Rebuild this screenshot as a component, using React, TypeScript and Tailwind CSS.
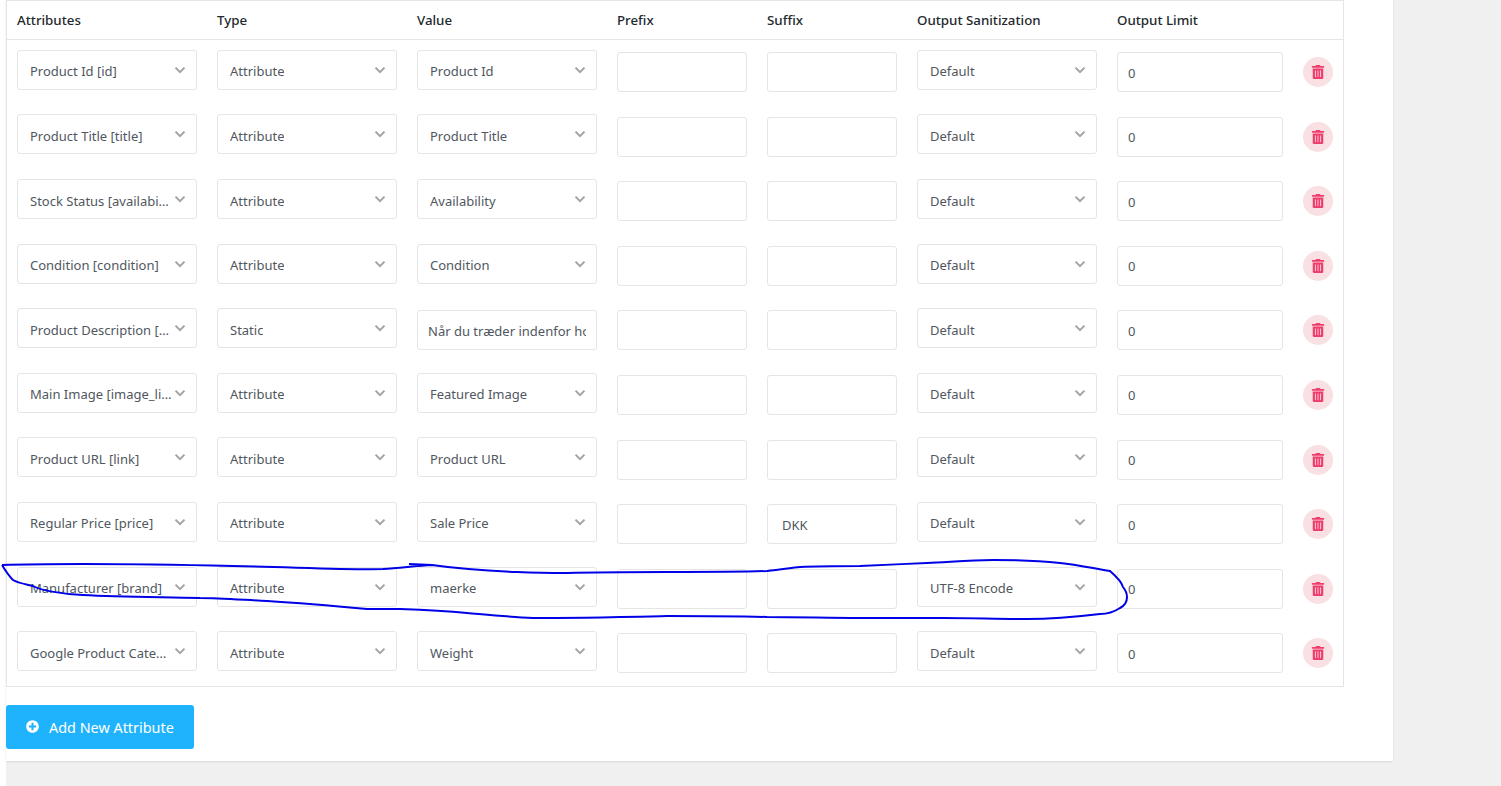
import React from "react";
import {FaPlusCircle, FaTrashAlt} from "react-icons/fa";

type Row = {
    attr: string
    type: string
    value: string
    valueInput?: boolean
    suffix?: string
    sanitize?: string
}

const rows: Row[] = [
    {attr: "Product Id [id]", type: "Attribute", value: "Product Id"},
    {attr: "Product Title [title]", type: "Attribute", value: "Product Title"},
    {attr: "Stock Status [availability]", type: "Attribute", value: "Availability"},
    {attr: "Condition [condition]", type: "Attribute", value: "Condition"},
    {attr: "Product Description [description]", type: "Static", value: "Når du træder indenfor hos os", valueInput: true},
    {attr: "Main Image [image_link]", type: "Attribute", value: "Featured Image"},
    {attr: "Product URL [link]", type: "Attribute", value: "Product URL"},
    {attr: "Regular Price [price]", type: "Attribute", value: "Sale Price", suffix: "DKK"},
    {attr: "Manufacturer [brand]", type: "Attribute", value: "maerke", sanitize: "UTF-8 Encode"},
    {attr: "Google Product Category [google_product_category]", type: "Attribute", value: "Weight"},
]

const headers = [
    {label: "Attributes", w: "w-[180px]"},
    {label: "Type", w: "w-[180px]"},
    {label: "Value", w: "w-[180px]"},
    {label: "Prefix", w: "w-[130px]"},
    {label: "Suffix", w: "w-[130px]"},
    {label: "Output Sanitization", w: "w-[180px]"},
    {label: "Output Limit", w: "w-[166px]"},
]

function Select({text}: { text: string }) {
    return (
        <div className="relative flex h-10 w-[180px] shrink-0 items-center rounded-[3px] border border-[#e5e5e5] bg-white pl-3 pr-[24px] pt-[4.5px]">
            <span className="truncate text-[13px] text-[#50575e]">{text}</span>
            <svg className="absolute right-[10.5px] top-[15px]" width="12" height="9" viewBox="0 0 12 9" fill="none">
                <path d="M1.5 1.6 L6 6.1 L10.5 1.6" stroke="#a3a3a3" strokeWidth="2"/>
            </svg>
        </div>
    )
}

function TextBox({value, w, pad = "px-[10px]"}: { value?: string, w: string, pad?: string }) {
    return (
        <input
            readOnly
            defaultValue={value}
            className={`${w} ${pad} mt-[2.2px] h-10 shrink-0 rounded-[3px] border border-[#e5e5e5] bg-white pt-[1px] text-[13px] text-[#50575e] outline-none`}
        />
    )
}

export default function App() {
    return (
        <div className="relative h-[786px] w-full overflow-hidden bg-white pl-[6px] font-['Noto_Sans','Open_Sans',sans-serif]">
            <div className="h-full bg-[#f0f0f0]">
                <div className="h-[761px] w-[1387px] bg-white shadow-[0_1px_2px_rgba(0,0,0,0.1)]">
                    <div className="w-[1338px] border border-[#e5e5e5]">
                        <div className="flex h-[38.9px] items-center gap-5 border-b border-[#e5e5e5] pl-[10px] pt-[2px] text-[13.3px] font-medium text-[#23282d]">
                            {headers.map((h) => (
                                <div key={h.label} className={`${h.w} shrink-0`}>{h.label}</div>
                            ))}
                        </div>
                        {rows.map((row) => (
                            <div key={row.attr} className="flex h-[64.58px] items-start gap-5 pl-[10px] pt-[10px]">
                                <Select text={row.attr}/>
                                <Select text={row.type}/>
                                {row.valueInput
                                    ? <TextBox value={row.value} w="w-[180px]"/>
                                    : <Select text={row.value}/>}
                                <TextBox w="w-[130px]"/>
                                <TextBox value={row.suffix} w="w-[130px]" pad="px-[14px]"/>
                                <Select text={row.sanitize || "Default"}/>
                                <TextBox value="0" w="w-[166px]"/>
                                <button className="mt-[7.2px] flex h-[30px] w-[30px] shrink-0 items-center justify-center rounded-full bg-[#f9e0e2] text-[#ef3e6d]">
                                    <FaTrashAlt size={14}/>
                                </button>
                            </div>
                        ))}
                    </div>
                    <button className="mt-[18px] flex h-11 w-[188px] items-center gap-[10px] rounded-[3px] bg-[#1fb3fd] pl-5 pt-[2px] text-[14.4px] text-white">
                        <FaPlusCircle size={13} className="-mt-[2px]"/>
                        Add New Attribute
                    </button>
                </div>
            </div>
            <svg className="pointer-events-none absolute left-0 top-0" width="1501" height="786" fill="none">
                <path
                    d="M2 565 C30 564 60 564 83 564 C130 564 190 565 233 566 C290 567 350 570 383 569 C400 568 415 566 432 565 M409 564 L432 565 C460 569 490 571 517 572 C540 573 550 573 567 573 C600 572 630 572 667 572 C700 572 740 572 767 571 C780 570 790 568 800 567 C820 566 840 566 860 566 C880 565 905 564 927 563 C950 562 970 560 993 560 C1020 560 1040 561 1060 563 C1080 565 1095 569 1110 571 C1118 578 1122 583 1123 587 C1127 592 1127 595 1127 597 C1127 602 1124 606 1120 608 C1114 612 1108 614 1100 614 C1075 617 1050 619 1027 619 C1000 619 970 618 943 618 C915 618 890 618 860 618 C830 618 800 617 767 617 C730 616 700 616 667 616 C620 617 575 618 533 618 C510 617 490 615 467 613 C445 611 425 610 400 609 C390 609 378 609 367 609 C335 606 300 603 267 601 C245 600 220 598 200 598 C160 597 120 597 83 595 C60 594 40 590 33 586 C25 584 18 583 13 580 C8 575 5 570 2 565"
                    stroke="#0000e6"
                    strokeWidth="2"
                />
            </svg>
        </div>
    );
}
